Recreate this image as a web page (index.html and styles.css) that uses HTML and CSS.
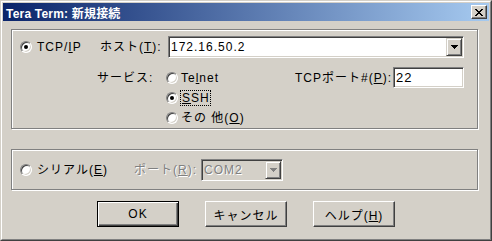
FILE: index.html
```html
<!DOCTYPE html>
<html lang="ja">
  <head>
    <meta charset="utf-8" />
    <title>Tera Term: 新規接続</title>
    <link rel="stylesheet" href="styles.css">
  </head>

  <body>
    <div class="window">
      <div class="frame">
        <div class="titlebar">
          <span class="title">Tera Term: 新規接続</span>
          <span class="close">
            <svg width="8" height="7" viewBox="0 0 8 7" shape-rendering="crispEdges">
              <path d="M0 0h2v1H0zM6 0h2v1H6zM1 1h2v1H1zM5 1h2v1H5zM2 2h4v1H2zM3 3h2v1H3zM2 4h4v1H2zM1 5h2v1H1zM5 5h2v1H5zM0 6h2v1H0zM6 6h2v1H6z" fill="#000"/>
            </svg>
          </span>
        </div>

        <div class="content">
          <div class="group group-tcp">
            <div class="row-host">
              <span class="radio checked"></span>
              <span class="lbl lbl-tcp">TCP/<u>I</u>P</span>
              <span class="lbl lbl-host">ホスト(<u>T</u>):</span>
              <div class="combo">
                <span class="combo-text">172.16.50.2</span>
                <span class="drop">
                  <svg width="7" height="4" viewBox="0 0 7 4" shape-rendering="crispEdges">
                    <path d="M0 0h7v1H0zM1 1h5v1H1zM2 2h3v1H2zM3 3h1v1H3z" fill="#000"/>
                  </svg>
                </span>
              </div>
            </div>

            <div class="row-service">
              <span class="lbl svc-label">サービス:</span>
              <div class="svc-options">
                <div class="opt"><span class="radio"></span><span class="lbl">Te<u>l</u>net</span></div>
                <div class="opt"><span class="radio checked"></span><span class="lbl focus"><u>S</u>SH</span></div>
                <div class="opt"><span class="radio"></span><span class="lbl">その 他(<u>O</u>)</span></div>
              </div>
              <div class="port">
                <span class="lbl">TCPポート#(<u>P</u>):</span>
                <div class="field">22</div>
              </div>
            </div>
          </div>

          <div class="group group-serial">
            <span class="radio"></span>
            <span class="lbl lbl-serial">シリアル(<u>E</u>)</span>
            <span class="lbl lbl-port disabled">ポート(<u>R</u>):</span>
            <div class="combo combo-disabled">
              <span class="combo-text disabled">COM2</span>
              <span class="drop">
                <svg width="7" height="4" viewBox="0 0 7 4" shape-rendering="crispEdges">
                  <path d="M0 0h7v1H0zM1 1h5v1H1zM2 2h3v1H2zM3 3h1v1H3z" fill="#808080"/>
                </svg>
              </span>
            </div>
          </div>

          <div class="buttons">
            <button class="btn btn-default">OK</button>
            <button class="btn">キャンセル</button>
            <button class="btn">ヘルプ(<u>H</u>)</button>
          </div>
        </div>
      </div>
    </div>
  </body>
</html>
```

FILE: styles.css
```css
html,
body {
  margin: 0;
  padding: 0;
}

body {
  font-family: "Liberation Sans", "Noto Sans CJK JP", sans-serif;
  font-size: 12px;
  letter-spacing: 1px;
  color: #000;
  background: #d4d0c8;
}

.window {
  width: 492px;
  height: 241px;
  box-sizing: border-box;
  border: 1px solid;
  border-color: #d4d0c8 #404040 #404040 #d4d0c8;
  background: #d4d0c8;
}

.frame {
  height: 100%;
  box-sizing: border-box;
  border: 1px solid;
  border-color: #fff #808080 #808080 #fff;
  padding: 1px;
}

.titlebar {
  height: 18px;
  display: flex;
  align-items: center;
  justify-content: space-between;
  padding: 0 2px 0 3px;
  background: linear-gradient(to right, #0a246a, #a6caf0);
}

.title {
  color: #fff;
  font-weight: bold;
  font-size: 12px;
  letter-spacing: 0.2px;
}

.close {
  width: 16px;
  height: 14px;
  box-sizing: border-box;
  display: flex;
  align-items: center;
  justify-content: center;
  background: #d4d0c8;
  border: 1px solid;
  border-color: #fff #404040 #404040 #fff;
  box-shadow: inset -1px -1px 0 #808080;
}

.content {
  padding: 8px 0 0 8px;
}

/* etched group boxes */
.group {
  width: 467px;
  box-sizing: border-box;
  border: 1px solid #808080;
  box-shadow: inset 1px 1px 0 #fff, 1px 1px 0 #fff;
}

.group-tcp {
  height: 100px;
  padding: 6px 13px 0 8px;
}

.lbl {
  white-space: nowrap;
  line-height: 14px;
}

.row-host {
  display: flex;
  align-items: center;
  height: 22px;
}

.lbl-tcp {
  width: 63px;
  margin-left: 5px;
}

.lbl-host {
  width: 68px;
}

.radio {
  position: relative;
  flex: none;
  width: 12px;
  height: 12px;
  box-sizing: border-box;
  border-radius: 50%;
  background: #fff;
  border: 1px solid;
  border-color: #808080 #fff #fff #808080;
  box-shadow: inset 1px 1px 0 #404040, inset -1px -1px 0 #d4d0c8;
}

.radio.checked::after {
  content: "";
  position: absolute;
  left: 3px;
  top: 3px;
  width: 4px;
  height: 4px;
  border-radius: 50%;
  background: #000;
}

.combo {
  flex: 1;
  height: 22px;
  box-sizing: border-box;
  display: flex;
  align-items: center;
  background: #fff;
  border: 1px solid;
  border-color: #808080 #fff #fff #808080;
  box-shadow: inset 1px 1px 0 #404040, inset -1px -1px 0 #d4d0c8;
  padding: 1px;
}

.combo-text {
  flex: 1;
  font-size: 12px;
  padding-left: 1px;
}

.drop {
  width: 16px;
  height: 18px;
  box-sizing: border-box;
  display: flex;
  align-items: center;
  justify-content: center;
  background: #d4d0c8;
  border: 1px solid;
  border-color: #d4d0c8 #404040 #404040 #d4d0c8;
  box-shadow: inset 1px 1px 0 #fff, inset -1px -1px 0 #808080;
}

.row-service {
  display: flex;
  margin-top: 9px;
  padding-left: 77px;
}

.svc-label {
  width: 69px;
  margin-top: 4px;
}

.svc-options {
  display: flex;
  flex-direction: column;
  margin-top: 1px;
}

.opt {
  display: flex;
  align-items: center;
  height: 20px;
  gap: 3px;
}

.focus {
  outline: 1px dotted #000;
  padding: 0 0 0 1px;
}

.port {
  margin-left: auto;
  display: flex;
  align-items: center;
  height: 21px;
  gap: 1px;
}

.field {
  width: 71px;
  height: 21px;
  box-sizing: border-box;
  background: #fff;
  border: 1px solid;
  border-color: #808080 #fff #fff #808080;
  box-shadow: inset 1px 1px 0 #404040, inset -1px -1px 0 #d4d0c8;
  padding: 2px 2px;
  font-size: 13px;
  line-height: 15px;
}

.group-serial {
  margin-top: 20px;
  height: 41px;
  display: flex;
  align-items: center;
  padding: 0 8px;
}

.lbl-serial {
  width: 97px;
  margin-left: 5px;
}

.lbl-port {
  width: 67px;
}

.disabled {
  color: #808080;
  text-shadow: 1px 1px 0 #fff;
}

.combo-disabled {
  flex: none;
  width: 82px;
  background: #d4d0c8;
}

.buttons {
  display: flex;
  gap: 26px;
  margin-top: 11px;
  padding-left: 86px;
}

.btn {
  width: 82px;
  height: 26px;
  box-sizing: border-box;
  font-family: "Liberation Sans", "Noto Sans CJK JP", sans-serif;
  font-size: 12px;
  letter-spacing: 1px;
  color: #000;
  background: #d4d0c8;
  border: 1px solid;
  border-color: #fff #404040 #404040 #fff;
  box-shadow: inset -1px -1px 0 #808080;
  padding: 0;
}

.btn-default {
  border-color: #000;
  box-shadow: inset 1px 1px 0 #fff, inset -1px -1px 0 #404040, inset -2px -2px 0 #808080;
}
```
